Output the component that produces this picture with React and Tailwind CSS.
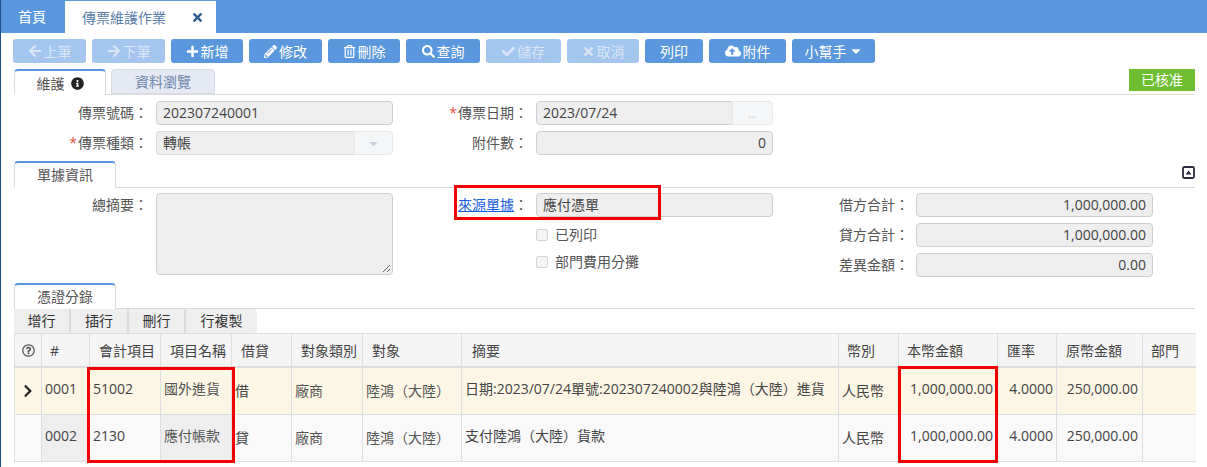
import React from "react";
import { FaArrowLeft, FaArrowRight, FaPlus, FaPencilAlt, FaRegTrashAlt, FaSearch, FaCheck, FaTimes, FaCloudUploadAlt, FaCaretDown, FaInfoCircle, FaRegQuestionCircle, FaChevronRight } from "react-icons/fa";

const font = "font-['Open_Sans','Noto_Sans_CJK_TC',sans-serif]";

function Btn({ w, icon, children, off }) {
  return (
    <div className={`${w} h-[24px] rounded-[3px] flex items-center justify-center gap-[2px] text-[14px] ${off ? "bg-[#a3c5ee] text-[#d9e6f7]" : "bg-[#5b97dc] text-white"}`}>
      {icon}
      <span>{children}</span>
    </div>
  );
}

function Label({ w, req, children }) {
  return (
    <div className={`${w} shrink-0 text-right text-[14px] text-[#555] leading-[24px] whitespace-nowrap`}>
      {req && <span className="text-[#e0533d] mr-[1px]">*</span>}
      {children}：
    </div>
  );
}

function Input({ w = "w-[237px]", right, children }) {
  return (
    <div className={`${w} h-[24px] shrink-0 rounded-[4px] border border-[#cfcfcf] bg-[#eeeeee] px-[6px] text-[14px] leading-[22px] text-[#444] whitespace-nowrap ${right ? "text-right" : ""}`}>
      {children}
    </div>
  );
}

function SectionTab({ children, w = "w-[102px]", h = "h-[26px]" }) {
  return (
    <div className={`${w} ${h} rounded-t-[4px] border-x border-[#dcdcdc] border-t-2 border-t-[#5b97dc] bg-white text-center text-[14px] leading-[23px] text-[#555] -mb-px relative`}>
      {children}
    </div>
  );
}

const cols = ["w-[27px]", "w-[48px]", "w-[71px]", "w-[71px]", "w-[60px]", "w-[71px]", "w-[99px]", "w-[377px]", "w-[60px]", "w-[99px]", "w-[59px]", "w-[86px]", "w-[53px]"];
const heads = [null, "#", "會計項目", "項目名稱", "借貸", "對象類別", "對象", "摘要", "幣別", "本幣金額", "匯率", "原幣金額", "部門"];
const headAlign = ["text-center", "pl-[8px]", "pl-[9px]", "pl-[9px]", "pl-[9px]", "pl-[9px]", "pl-[9px]", "pl-[10px]", "pl-[8px]", "pl-[8px]", "pl-[9px]", "pl-[9px]", "pl-[8px]"];

const rows = [
  { arrow: true, bg: "bg-[#fcf7e4]", no: "0001", code: "51002", name: "國外進貨", dc: "借", desc: "日期:2023/07/24單號:202307240002與陸鴻（大陸）進貨" },
  { arrow: false, bg: "bg-[#f9f9f9]", no: "0002", code: "2130", name: "應付帳款", dc: "貸", desc: "支付陸鴻（大陸）貨款" },
];

function Td({ children, cls = "", ...p }) {
  return <td className={`border-r border-b border-[#dedede] p-0 whitespace-nowrap overflow-hidden ${cls}`} {...p}>{children}</td>;
}

export default function App() {
  return (
    <div className={`relative w-[1207px] h-[467px] overflow-hidden bg-white border-l-[1px] border-[#1f4f8b] ${font}`}>
      <div className="h-[33px] bg-[#5b97dc] flex items-end text-[14px]">
        <div className="w-[64px] h-[32px] leading-[32px] pl-[17px] text-white">首頁</div>
        <div className="w-[151px] h-[32px] bg-white flex items-center pl-[17px] text-[#5b7ea8]">
          <span>傳票維護作業</span>
          <FaTimes className="ml-[25px] text-[13px] text-[#2f5f92]" />
        </div>
      </div>

      <div className="pl-[12px] pt-[6px] flex gap-[6px]">
        <Btn w="w-[73px]" off icon={<FaArrowLeft className="text-[14px]" />}>上筆</Btn>
        <Btn w="w-[73px]" off icon={<FaArrowRight className="text-[14px]" />}>下筆</Btn>
        <Btn w="w-[72px]" icon={<FaPlus className="text-[13px]" />}>新增</Btn>
        <Btn w="w-[73px]" icon={<FaPencilAlt className="text-[13px]" />}>修改</Btn>
        <Btn w="w-[72px]" icon={<FaRegTrashAlt className="text-[13px]" />}>刪除</Btn>
        <Btn w="w-[74px]" icon={<FaSearch className="text-[13px]" />}>查詢</Btn>
        <Btn w="w-[75px]" off icon={<FaCheck className="text-[13px]" />}>儲存</Btn>
        <Btn w="w-[72px]" off icon={<FaTimes className="text-[13px]" />}>取消</Btn>
        <Btn w="w-[58px]">列印</Btn>
        <Btn w="w-[77px]" icon={<FaCloudUploadAlt className="text-[16px]" />}>附件</Btn>
        <div className="w-[83px] h-[24px] rounded-[3px] bg-[#5b97dc] text-white text-[14px] flex items-center justify-center gap-[2px]">
          <span>小幫手</span>
          <FaCaretDown className="text-[14px]" />
        </div>
      </div>

      <div className="ml-[13px] w-[1181px] mt-[6px] border-b border-[#dcdcdc] flex items-end gap-[5px] h-[26px]">
        <div className="w-[92px] h-[26px] rounded-t-[4px] border-x border-[#dcdcdc] border-t-2 border-t-[#5b97dc] bg-white flex items-center justify-center gap-[6px] text-[14px] text-[#555] -mb-px relative">
          <span>維護</span>
          <FaInfoCircle className="text-[13px] text-[#222]" />
        </div>
        <div className="w-[104px] h-[25px] rounded-t-[4px] border border-[#d7dce6] bg-[#e4e9f3] text-center text-[14px] leading-[23px] text-[#6f86ad]">資料瀏覽</div>
        <div className="ml-auto mb-[3px] self-end w-[66px] h-[22px] bg-[#6fbe32] text-white text-[14px] leading-[22px] text-center">已核准</div>
      </div>

      <div className="pt-[6px] flex flex-col gap-[6px]">
        <div className="flex">
          <Label w="w-[147px]">傳票號碼</Label>
          <div className="ml-[8px]"><Input>202307240001</Input></div>
          <Label w="w-[135px]" req>傳票日期</Label>
          <div className="ml-[8px] w-[237px] h-[24px] flex">
            <Input w="w-[198px]">2023/07/24</Input>
            <div className="flex-1 -ml-[2px] rounded-r-[4px] border border-[#e6e8ec] bg-[#f5f6f8] text-center text-[10px] leading-[24px] text-[#c0c4cc]">...</div>
          </div>
        </div>
        <div className="flex">
          <Label w="w-[147px]" req>傳票種類</Label>
          <div className="ml-[8px] w-[237px] h-[24px] flex">
            <div className="w-[198px] h-[24px] rounded-l-[4px] border border-r-0 border-[#dcdcdc] bg-[#eeeeee] px-[6px] text-[14px] leading-[22px] text-[#444]">轉帳</div>
            <div className="flex-1 rounded-r-[4px] border border-[#e6e8ec] bg-[#f5f6f8] flex items-center justify-center">
              <FaCaretDown className="text-[13px] text-[#cdd3dc]" />
            </div>
          </div>
          <Label w="w-[135px]">附件數</Label>
          <div className="ml-[8px]"><Input right>0</Input></div>
        </div>
      </div>

      <div className="ml-[13px] w-[1181px] mt-[6px] border-b border-[#dcdcdc] flex items-center justify-between h-[27px]">
        <SectionTab h="h-[27px]">單據資訊</SectionTab>
        <svg className="mb-[3px]" width="13" height="13" viewBox="0 0 13 13">
          <rect x="1" y="1" width="11" height="11" rx="1.5" fill="#fff" stroke="#2b2b40" strokeWidth="1.8" />
          <path d="M3.5 8.5 L6.5 4.5 L9.5 8.5 Z" fill="#2b2b40" />
        </svg>
      </div>

      <div className="flex pt-[5px] h-[95px]">
        <Label w="w-[147px]">總摘要</Label>
        <div className="ml-[8px] relative w-[237px] h-[82px] rounded-[4px] border border-[#cfcfcf] bg-[#eeeeee]">
          <svg className="absolute right-[1px] bottom-[1px]" width="9" height="9" viewBox="0 0 9 9"><path d="M1 8 L8 1 M5 8 L8 5" stroke="#666" strokeWidth="1" /></svg>
        </div>
        <div className="w-[135px] shrink-0 text-right text-[14px] leading-[24px] text-[#555] whitespace-nowrap">
          <span className="text-[#1a5fe0] underline">來源單據</span>：
        </div>
        <div className="ml-[8px] flex flex-col">
          <Input>應付憑單</Input>
          <div className="h-[13px] mt-[11px] flex items-center gap-[7px] text-[14px] text-[#555]">
            <span className="w-[12px] h-[12px] rounded-[2px] border border-[#d5d5d5] bg-[#f5f5f5]"></span>已列印
          </div>
          <div className="h-[13px] mt-[14px] flex items-center gap-[7px] text-[14px] text-[#555]">
            <span className="w-[12px] h-[12px] rounded-[2px] border border-[#d5d5d5] bg-[#f5f5f5]"></span>部門費用分攤
          </div>
        </div>
        <div className="flex flex-col gap-[6px]">
          <div className="flex"><Label w="w-[136px]">借方合計</Label><div className="ml-[7px]"><Input right>1,000,000.00</Input></div></div>
          <div className="flex"><Label w="w-[136px]">貸方合計</Label><div className="ml-[7px]"><Input right>1,000,000.00</Input></div></div>
          <div className="flex"><Label w="w-[136px]">差異金額</Label><div className="ml-[7px]"><Input right>0.00</Input></div></div>
        </div>
      </div>

      <div className="ml-[13px] w-[1181px] border-b border-[#dcdcdc] h-[26px] flex items-end">
        <SectionTab>憑證分錄</SectionTab>
      </div>

      <div className="ml-[13px] h-[24px] flex w-[243px] rounded-br-[4px] rounded-tr-[4px] bg-[#eeeeee] text-[14px] text-[#333] leading-[24px] text-center">
        <div className="w-[57px] border-r-2 border-[#dcdcdc]">增行</div>
        <div className="w-[58px] border-r-2 border-[#dcdcdc]">插行</div>
        <div className="w-[57px] border-r-2 border-[#dcdcdc]">刪行</div>
        <div className="flex-1">行複製</div>
      </div>

      <div className="ml-[13px]">
        <table className="table-fixed border-separate border-spacing-0 w-[1181px] text-[14px] text-[#444] border-t border-l border-[#dedede]">
          <colgroup>
            {cols.map((c, i) => <col key={i} className={c} />)}
          </colgroup>
          <thead>
            <tr className="h-[34px] bg-[#f5f5f5] text-[#444]">
              {heads.map((h, i) => (
                <th key={i} className={`border-r border-b-[2px] border-[#dedede] p-0 font-normal text-left whitespace-nowrap ${headAlign[i]} ${i === 12 ? "border-r-0" : ""}`}>
                  {i === 0 ? <FaRegQuestionCircle className="mx-auto text-[13px] text-[#555]" /> : h}
                </th>
              ))}
            </tr>
          </thead>
          <tbody>
            {rows.map((r, idx) => (
              <tr key={idx} className={`h-[47px] ${r.bg}`}>
                <Td cls="text-center">{r.arrow && <FaChevronRight className="mx-auto text-[14px] text-[#222]" />}</Td>
                <Td cls={`pl-[3px] ${idx === 1 ? "bg-[#eeeeee]" : ""}`}><div className="-mt-[6px]">{r.no}</div></Td>
                <Td cls="pl-[3px]"><div className="-mt-[6px]">{r.code}</div></Td>
                <Td cls={`pl-[3px] text-[#555] ${idx === 1 ? "bg-[#eeeeee]" : ""}`}><div className="-mt-[6px]">{r.name}</div></Td>
                <Td cls="pl-[3px]"><div className="-mt-[2px]">{r.dc}</div></Td>
                <Td cls="pl-[3px] text-[#555]"><div className="-mt-[2px]">廠商</div></Td>
                <Td cls="pl-[3px] text-[#555]"><div className="-mt-[2px]">陸鴻（大陸）</div></Td>
                <Td cls="pl-[3px]"><div className="-mt-[6px]">{r.desc}</div></Td>
                <Td cls="pl-[3px]"><div className="-mt-[2px]">人民幣</div></Td>
                <Td cls="text-right pr-[4px]"><div className="-mt-[6px]">1,000,000.00</div></Td>
                <Td cls="text-right pr-[3px]"><div className="-mt-[6px]">4.0000</div></Td>
                <Td cls="text-right pr-[4px]"><div className="-mt-[6px]">250,000.00</div></Td>
                <Td cls="border-r-0"></Td>
              </tr>
            ))}
          </tbody>
        </table>
      </div>

      <div className="absolute left-[453px] top-[185px] w-[207px] h-[35px] border-[3px] border-[#f00000]"></div>
      <div className="absolute left-[86px] top-[367px] w-[148px] h-[96px] border-[3px] border-[#f00000]"></div>
      <div className="absolute left-[897px] top-[366px] w-[100px] h-[97px] border-[3px] border-[#f00000]"></div>
    </div>
  );
}
